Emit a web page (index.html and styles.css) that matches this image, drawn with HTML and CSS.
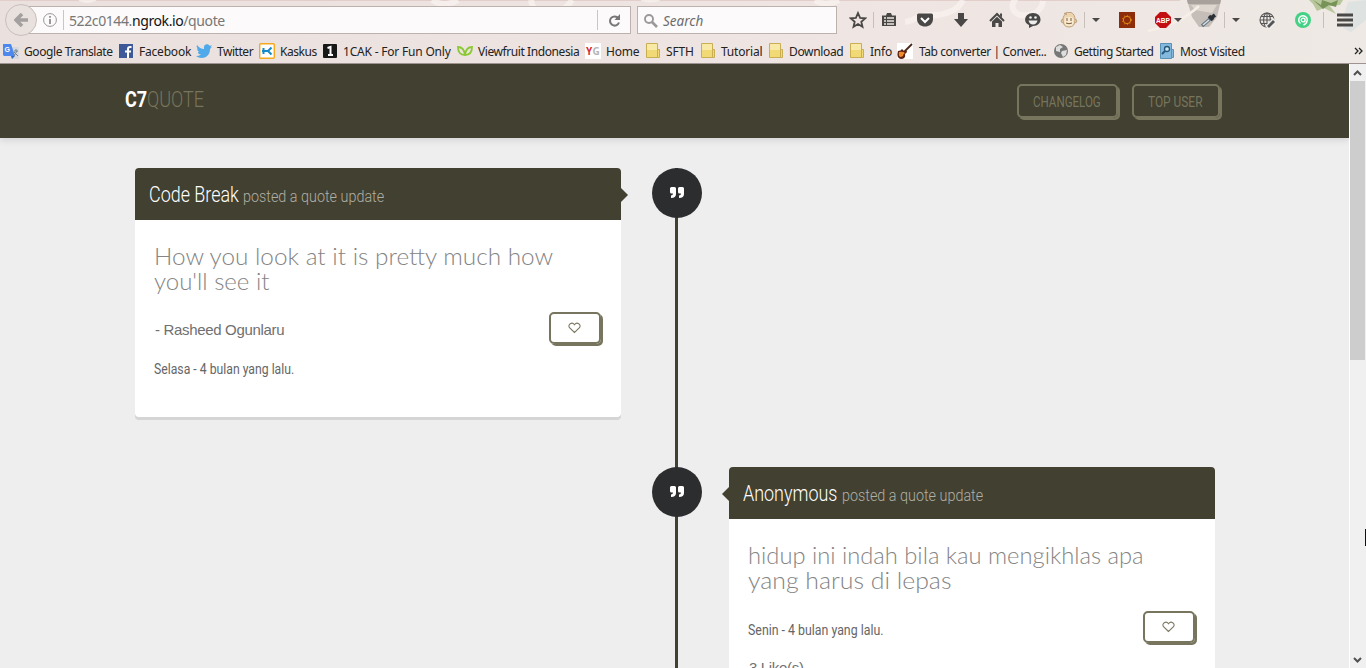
FILE: index.html
```html
<!DOCTYPE html>
<html lang="id">
<head>
<meta charset="utf-8">
<title>C7QUOTE</title>
<link rel="stylesheet" href="styles.css">
</head>
<body>
<div class="window">
<header class="chrome">
  <svg class="theme" width="1366" height="63" viewBox="0 0 1366 63">
    <defs><linearGradient id="th" x1="0" x2="1"><stop offset="0" stop-color="#eae0de"/><stop offset=".65" stop-color="#efe5e2"/><stop offset="1" stop-color="#eee9e4"/></linearGradient></defs>
    <path fill="url(#th)" d="M0 0h1366v63H0z"/><path fill="#e2cfcc" d="M0 0h1180v1H0z"/>
    <g fill="none" stroke="#f8f1ef" stroke-width="6" opacity=".8"><path d="M80-2q8 4 15 0M432 0q12 8 26 0M531 0c3 20 30 18 41 0M642-2q8 3 17 0M815 0q10 7 24 0M905 22c10-1 12-7 24-7 18 1 30-6 34-15M1018-4c-12 12-2 21 10 19 8-1 14-6 15-14"/></g>
    <path fill="#c5beb8" d="M1187 0h34l-4 17-8 10h-10l-7-10z"/><path fill="#a7a09b" d="M1187 0h34l-1 4h-32z"/><path fill="#ddd6cf" d="M1191 5h26l-5 8-17-3z"/><path d="M1148 31q32-7 51-25" fill="none" stroke="#f6efe8" stroke-width="2.500"/>
    <path fill="#b9c79c" d="M1309 0h34l-3 5-10 1 6 8-12-6-7 3-4-7z"/>
    <path fill="#789358" d="m1313 0 8 5 1-5 9 3 7-3-2 7-7-2-6 4z"/><path fill="#d9e1e0" d="m1348 2 18-2v20l-15 12-8-4 11-8-11-2z" opacity=".8"/>
  </svg>
  <div class="nav">
    <div class="address">
      <div class="back"><svg width="14" height="14" viewBox="0 0 14 14"><path d="M8 1 2 7l6 6M2 7h12" fill="none" stroke="#a3a09f" stroke-width="3.6"/></svg></div>
      <svg class="info" width="14" height="14" viewBox="0 0 14 14"><circle cx="7" cy="7" r="6.4" fill="none" stroke="#999"/><path d="M7 3v1.7M7 6v5" stroke="#888" stroke-width="1.7"/></svg>
      <div class="url"><span class="muted">522c0144.</span><span class="host">ngrok.io</span><span class="muted">/quote</span></div>
      <div class="reload"><svg width="13" height="13" viewBox="0 0 13 13"><path d="M10.3 4.2A4.6 4.6 0 1 0 11 8.5" fill="none" stroke="#777" stroke-width="2"/><path fill="#777" d="M12 0v6H6.5z"/></svg></div>
    </div>
    <div class="search"><svg width="14" height="14" viewBox="0 0 14 14"><circle cx="5" cy="5" r="4" fill="none" stroke="#999" stroke-width="1.9"/><path d="m8 8 5 5" stroke="#999" stroke-width="2.6"/></svg><span>Search</span></div>
    <div class="tools">
      <div class="tool star"><svg width="18" height="18" viewBox="0 0 18 18"><path d="m9 2 2.1 4.8 5.1.5-3.9 3.4 1.2 5.1L9 13.1l-4.5 2.7 1.2-5.1-3.9-3.4 5.1-.5z" fill="none" stroke="#4a4847" stroke-width="1.8"/></svg></div>
      <div class="tool ruled"><svg width="16" height="16" viewBox="0 0 16 16"><path fill="#4a4847" d="M1 3.500h4L6 1h4l1 2.500h4V14H1z"/><path d="M3 6h2M6 6h7M3 9h2M6 9h7M3 12h2M6 12h7" stroke="#eee6e3" stroke-width="1.500"/></svg></div>
      <div class="tool"><svg width="16" height="16" viewBox="0 0 16 16"><path fill="#4a4847" d="M1.500 1.500h13Q16 1.500 16 3v4c0 10-16 10-16 0V3q0-1.500 1.500-1.500z"/><path d="m4 6 4 4 4-4" fill="none" stroke="#fff" stroke-width="2"/></svg></div>
      <div class="tool"><svg width="16" height="16" viewBox="0 0 16 16"><path fill="#4a4847" d="M5 1h6v6h4l-7 8-7-8h4z"/></svg></div>
      <div class="tool"><svg width="16" height="16" viewBox="0 0 16 16"><path d="m1 9 7-7 7 7" fill="none" stroke="#4a4847" stroke-width="2"/><path fill="#4a4847" d="M3 9.500 8 4.700l5 4.800V15H9.500v-4h-3v4H3zM11 1.500h2v4l-2-2z"/></svg></div>
      <div class="tool smile"><svg width="16" height="16" viewBox="0 0 16 16"><path fill="#4a4847" d="M8 1c10 0 10 13 0 13l-4 2v-3C-3 10 0 1 8 1z"/><circle cx="5.500" cy="5.500" r="1.300" fill="#eee"/><circle cx="10.500" cy="5.500" r="1.300" fill="#eee"/><path fill="#eee" d="M3.500 8.500h9q-1 4-4.500 4t-4.500-4z"/></svg></div>
      <div class="tool smile"><svg width="18" height="18" viewBox="0 0 18 18"><g fill="#ecd5ae" stroke="#c0a27c"><circle cx="3" cy="10" r="1.800"/><circle cx="15" cy="10" r="1.800"/><path d="M3 9Q3 3 7 3l-3-.5Q7 1 11 1.500 15 3 15 9q0 7-6 7t-6-7z"/></g><path fill="#f7ead0" d="M4.500 8Q5 6 9 6t4.500 2v3q0 4-4.500 4t-4.500-4z"/><path d="M7 7v3m4-3v3M6 12q3 1.500 6 0" fill="none" stroke="#7a583b"/></svg></div>
      <div class="tool drop ruled"><i class="caret"></i></div>
      <div class="tool"><svg width="16" height="16" viewBox="0 0 16 16"><path fill="#8d2d0c" d="M0 0h16v16H0z"/><circle cx="8" cy="8" r="3.700" fill="none" stroke="#e58a16"/><circle cx="8" cy="8" r="4.600" fill="none" stroke="#e58a16" stroke-dasharray="1 2"/></svg></div>
      <div class="tool abp"><svg width="16" height="16" viewBox="0 0 16 16"><path fill="#c40f12" d="M5 0h6l5 5v6l-5 5H5l-5-5V5z"/><text x="8" y="11" text-anchor="middle" textLength="14" lengthAdjust="spacingAndGlyphs">ABP</text></svg><i class="caret"></i></div>
      <div class="tool dropper"><svg width="16" height="16" viewBox="0 0 16 16"><path d="m1 14 8-7" stroke="#697781" stroke-width="3.500"/><path d="m2 13 6-5" stroke="#d7e3e8" stroke-width="1.500"/><path d="m8 4 4 4M10 6l4-3" stroke="#2b3036" stroke-width="3.500"/></svg></div>
      <div class="tool drop ruled"><i class="caret"></i></div>
      <div class="tool"><svg width="17" height="17" viewBox="0 0 17 17"><g fill="none" stroke="#555" stroke-width="1.100"><circle cx="8" cy="8" r="7"/><ellipse cx="8" cy="8" rx="3.400" ry="7"/><path d="M1 8h14M2 4.500h12M2 11.500h12M8 1v14"/></g><path d="m8 16 8-8" stroke="#eee" stroke-width="5.500"/><path d="m9 15 6-6" stroke="#555" stroke-width="2.800"/></svg></div>
      <div class="tool"><svg width="16" height="16" viewBox="0 0 16 16"><circle cx="8" cy="8" r="8" fill="#43d185"/><path d="M5.500 11.500A4.300 4.300 0 1 1 12.300 8Q12 11.500 8.500 13" fill="none" stroke="#fff" stroke-width="1.500"/><circle cx="8.200" cy="8" r="1.900" fill="none" stroke="#fff" stroke-width="1.400"/></svg></div>
      <div class="tool menu ruled"><svg width="16" height="14" viewBox="0 0 16 14"><path d="M0 2h16M0 7h16M0 12h16" stroke="#4a4847" stroke-width="3"/></svg></div>
    </div>
  </div>
  <nav class="bookmarks">
    <a><svg width="16" height="16" viewBox="0 0 16 16"><path fill="#d5d8dc" d="M6 4h10v12H8z"/><path fill="#4d88ee" d="M0 1h8l4 12H1L0 12z"/><path fill="#3569c3" d="m8 13h4l-3 3z"/><path d="M11 8h4m-2-2v2m-2 5 3-5m-3 1 4 4" stroke="#728391"/><text class="g" x="1.500" y="9">G</text></svg><span>Google Translate</span></a>
    <a><svg width="16" height="16" viewBox="0 0 16 16"><path fill="#3d5998" d="M1 1h14v14H1z"/><path d="M13.500 4H12q-2 0-2 2v9M7 8.500h6" fill="none" stroke="#fff" stroke-width="2"/></svg><span>Facebook</span></a>
    <a><svg width="16" height="16" viewBox="0 0 16 16"><path fill="#50a9e8" d="M1 2q3 4 7 4c-1-5 4-6 6-3l2-1-1.500 2.500L16 4l-2 2c0 9-9 11-14 7q3 0 5-1.500-3 0-3-2.500h1.500Q1 8 1 5l1 .5Q0 4 1 2z"/></svg><span>Twitter</span></a>
    <a><svg width="16" height="16" viewBox="0 0 16 16"><rect x=".7" y=".7" width="14.600" height="14.600" rx="1" fill="#fff" stroke="#f5a91f" stroke-width="1.400"/><path d="M3 8h6M4.500 5v6M12.500 4.500 9 8l3.500 3.500" fill="none" stroke="#168acb" stroke-width="2"/></svg><span>Kaskus</span></a>
    <a><svg width="16" height="16" viewBox="0 0 16 16"><rect x="1" y="1" width="14" height="14" rx="1" fill="#181818"/><path d="m5.500 5 3-1v8M6 12h5" fill="none" stroke="#fff" stroke-width="2"/></svg><span>1CAK - For Fun Only</span></a>
    <a><svg width="16" height="16" viewBox="0 0 16 16"><path d="M1 4q6 0 7 8-7 0-7-8zm14 0q-6 0-7 8 7 0 7-8z" fill="none" stroke="#8bc934" stroke-width="1.800"/></svg><span>Viewfruit Indonesia</span></a>
    <a><svg width="16" height="16" viewBox="0 0 16 16"><path fill="#fff" d="M0 0h16v16H0z"/><text class="yg" x="1" y="12" fill="#d62b36">Y</text><text class="yg" x="7.500" y="12" fill="#b5b5b5">G</text></svg><span>Home</span></a>
    <a><svg width="16" height="16" viewBox="0 0 16 16"><g fill="#f1da75" stroke="#c9ae52"><path d="M11.500 6.500h3v8h-3z"/><path d="M1.500.5h11v14h-11z"/></g><path fill="#f8eaa6" d="M2 1h10v6H2z"/></svg><span>SFTH</span></a>
    <a><svg width="16" height="16" viewBox="0 0 16 16"><g fill="#f1da75" stroke="#c9ae52"><path d="M11.500 6.500h3v8h-3z"/><path d="M1.500.5h11v14h-11z"/></g><path fill="#f8eaa6" d="M2 1h10v6H2z"/></svg><span>Tutorial</span></a>
    <a><svg width="16" height="16" viewBox="0 0 16 16"><g fill="#f1da75" stroke="#c9ae52"><path d="M11.500 6.500h3v8h-3z"/><path d="M1.500.5h11v14h-11z"/></g><path fill="#f8eaa6" d="M2 1h10v6H2z"/></svg><span>Download</span></a>
    <a><svg width="16" height="16" viewBox="0 0 16 16"><g fill="#f1da75" stroke="#c9ae52"><path d="M11.500 6.500h3v8h-3z"/><path d="M1.500.5h11v14h-11z"/></g><path fill="#f8eaa6" d="M2 1h10v6H2z"/></svg><span>Info</span></a>
    <a><svg width="16" height="16" viewBox="0 0 16 16"><path fill="#fff" d="M0 0h16v16H0z"/><path d="m7 9 8-8" stroke="#4a2416" stroke-width="1.800"/><path fill="#5a2313" d="M1 8q3 0 4-2l2 2h3q0 2-2 3 1 5-4 5-5-1-3-8z"/><path fill="#f08c2c" d="M2 9q4-1 6 1-2 1-2 3-5 3-4-4z"/></svg><span>Tab converter | Conver...</span></a>
    <a><svg width="16" height="16" viewBox="0 0 16 16"><circle cx="8" cy="8" r="7" fill="#777"/><path fill="#ddd" d="M3 4l4-2 3 2-3 2v3L3 8zm6 4 5-1-1 5-3 2-2-4z"/></svg><span>Getting Started</span></a>
    <a><svg width="16" height="16" viewBox="0 0 16 16"><path fill="#83b9dc" stroke="#5c91b6" d="M1.500.5h11v15h-11zm11 6h2v8h-2"/><circle cx="8" cy="6" r="2.500" fill="#c9e5f3" stroke="#26557a" stroke-width="1.300"/><path d="m6 8-3 3" stroke="#26557a" stroke-width="1.800"/></svg><span>Most Visited</span></a>
    <svg class="more" width="9" height="8" viewBox="0 0 9 8"><path d="m1 1 3 3-3 3M5 1l3 3-3 3" fill="none" stroke="#222" stroke-width="1.300"/></svg>
  </nav>
</header>
<div class="viewport">
  <div class="page">
    <header class="site-head">
      <h1 class="logo"><b class="logo-c7">C7</b><span class="logo-quote">QUOTE</span></h1>
      <div class="menu-buttons"><a class="btn changelog"><span>CHANGELOG</span></a><a class="btn topuser"><span>TOP USER</span></a></div>
    </header>
    <main class="timeline">
      <section class="entry">
        <article class="card">
          <header class="card-head left"><b class="name code">Code Break</b><span class="posted">posted a quote update</span></header>
          <div class="card-body">
            <h2><span class="q q1">How you look at it is pretty much how</span><span class="q q2">you'll see it</span></h2>
            <div class="details"><div><p class="author">- Rasheed Ogunlaru</p><p class="when w1"><span>Selasa - 4 bulan yang lalu.</span></p></div>
            <a class="like"><svg width="13" height="12" viewBox="0 0 13 12"><path d="M6.500 10.500 1.500 5.700C-.7 2.500 4-.8 6.500 2.700 9-.8 13.700 2.500 11.500 5.700z" fill="none" stroke="#7b7960" stroke-width="1.100"/></svg></a></div>
          </div>
        </article>
        <div class="axis"><div class="dot"><svg width="14" height="12" viewBox="0 0 14 12"><path d="M0 1.500Q0 0 1.500 0h3Q6 0 6 1.500V7q0 4-5 4V8.500q2 0 2-2H1.500Q0 6.500 0 5zM8 1.500Q8 0 9.500 0h3Q14 0 14 1.500V7q0 4-5 4V8.500q2 0 2-2H9.500Q8 6.500 8 5z" fill="#fff"/></svg></div></div>
      </section>
      <section class="entry second">
        <div class="axis"><div class="dot"><svg width="14" height="12" viewBox="0 0 14 12"><path d="M0 1.500Q0 0 1.500 0h3Q6 0 6 1.500V7q0 4-5 4V8.500q2 0 2-2H1.500Q0 6.500 0 5zM8 1.500Q8 0 9.500 0h3Q14 0 14 1.500V7q0 4-5 4V8.500q2 0 2-2H9.500Q8 6.500 8 5z" fill="#fff"/></svg></div></div>
        <article class="card">
          <header class="card-head right"><b class="name anon">Anonymous</b><span class="posted">posted a quote update</span></header>
          <div class="card-body">
            <h2><span class="q q3">hidup ini indah bila kau mengikhlas apa</span><span class="q q4">yang harus di lepas</span></h2>
            <div class="details"><div><p class="when w2"><span>Senin - 4 bulan yang lalu.</span></p><p class="author likes">3 Like(s)</p></div>
            <a class="like"><svg width="13" height="12" viewBox="0 0 13 12"><path d="M6.500 10.500 1.500 5.700C-.7 2.500 4-.8 6.500 2.700 9-.8 13.700 2.500 11.500 5.700z" fill="none" stroke="#7b7960" stroke-width="1.100"/></svg></a></div>
          </div>
        </article>
      </section>
    </main>
  </div>
  <aside class="scrollbar"><svg width="9" height="6" viewBox="0 0 9 6"><path d="m1 5 3.500-3.500L8 5" fill="none" stroke="#505050" stroke-width="2"/></svg><div class="thumb"></div><svg width="9" height="6" viewBox="0 0 9 6"><path d="m1 1 3.500 3.500L8 1" fill="none" stroke="#505050" stroke-width="2"/></svg><i class="cursor"></i></aside>
</div>
</div>
</body>
</html>
```
FILE: styles.css
```css
* { box-sizing: border-box; }
body { margin: 0; overflow: hidden; font-family: "Liberation Sans", sans-serif; }
h1, h2, p { margin: 0; font-weight: 400; }
svg { display: block; flex: none; }
.window { width: 1366px; height: 668px; overflow: hidden; display: flex; flex-direction: column; }

.chrome { position: relative; height: 64px; flex: none; border-bottom: 1px solid #9d9490; font-family: "Noto Sans", sans-serif; }
.theme { position: absolute; inset: 0; }
.nav { position: relative; height: 39px; display: flex; padding: 6px 0 0 20px; }
.address { width: 611px; height: 28px; display: flex; align-items: center; background: #fcfafa; border: 1px solid #bbb1ad; }
.back { width: 32px; height: 32px; flex: none; margin-left: -16px; border-radius: 50%; border: 1px solid #c9bfbb; background: #e9e1de; display: flex; align-items: center; justify-content: center; }
.info { margin-left: 6px; }
.url { flex: 1; height: 20px; margin-left: 6px; padding-left: 5px; border-left: 1px solid #ccc6c3; display: flex; font-size: 14px; line-height: 21px; letter-spacing: -.4px; white-space: nowrap; }
.muted { color: #777; }
.host { color: #111; }
.reload { width: 33px; height: 20px; border-left: 1px solid #ccc6c3; display: flex; align-items: center; justify-content: center; }
.search { width: 200px; height: 28px; margin-left: 6px; padding: 1px 6px 0; display: flex; align-items: center; gap: 5px; background: #fcfafa; border: 1px solid #bbb1ad; font-size: 13.5px; font-style: italic; color: #6c6c6c; }
.tools { display: flex; height: 28px; margin-left: 8px; }
.tool { width: 36px; flex: none; display: flex; align-items: center; justify-content: center; position: relative; }
.star { width: 26px; }
.smile { padding-right: 1px; }
.drop { width: 22px; padding-right: 5px; }
.dropper { margin-left: 10px; }
.menu { width: 45px; padding-left: 3px; }
.ruled::before { content: ""; position: absolute; left: 2px; top: 6px; height: 16px; border-left: 1px solid #c8bfbb; }
.drop.ruled::before { left: -3px; }
.caret { border: 4px solid transparent; border-top-color: #4a4847; border-bottom: 0; }
.abp .caret { position: absolute; left: 29px; top: 12px; }
.abp text { font: 700 7.5px "Liberation Sans", sans-serif; fill: #fff; }
.bookmarks { position: relative; height: 24px; display: flex; align-items: center; padding-left: 3px; }
.bookmarks a { flex: none; display: flex; align-items: center; gap: 5px; height: 20px; font-size: 12px; letter-spacing: -.2px; line-height: 20px; color: #222; white-space: nowrap; }
.bookmarks a span { padding-top: 2px; }
.bookmarks a:nth-child(1) { width: 115px; letter-spacing: -.42px; }
.bookmarks a:nth-child(2) { width: 78px; }
.bookmarks a:nth-child(3), .bookmarks a:nth-child(4) { width: 63px; letter-spacing: -.45px; }
.bookmarks a:nth-child(5) { width: 135px; }
.bookmarks a:nth-child(6) { width: 128px; letter-spacing: -.42px; }
.bookmarks a:nth-child(7) { width: 60px; }
.bookmarks a:nth-child(8) { width: 55px; }
.bookmarks a:nth-child(9) { width: 68px; }
.bookmarks a:nth-child(10) { width: 81px; letter-spacing: -.35px; }
.bookmarks a:nth-child(11) { width: 48px; }
.bookmarks a:nth-child(12) { width: 156px; gap: 6px; letter-spacing: -.42px; }
.bookmarks a:nth-child(13) { width: 106px; letter-spacing: -.45px; }
.bookmarks a:nth-child(14) { width: 95px; letter-spacing: -.35px; }
.more { margin-left: 100px; }
.g { font: 700 7px "Liberation Sans", sans-serif; fill: #fff; }
.yg { font: 700 10px "Open Sans", sans-serif; }

.viewport { flex: 1; display: flex; min-height: 0; }
.page { width: 1349px; flex: none; overflow: hidden; background: #eee; }
.site-head { height: 74px; padding: 20px 129px 0 125px; display: flex; justify-content: space-between; background: #424030; box-shadow: 0 2px 7px rgba(0,0,0,.12); font-family: Roboto, sans-serif; }
.logo { display: flex; font-size: 22px; line-height: 31px; }
.logo b, .logo span, .name, .posted, .btn span, .q, .when span { display: block; flex: none; white-space: nowrap; transform-origin: 0 50%; }
.logo-c7 { width: 22px; color: #fff; transform: scaleX(.82); font-weight: 700; }
.logo-quote { color: #77755d; font-weight: 300; transform: scaleX(.82); width: 60px; }
.menu-buttons { display: flex; gap: 14px; }
.btn { height: 34px; border: 2px solid #77755d; border-radius: 5px; box-shadow: 2px 2px 0 #77755d; padding-left: 14px; color: #77755d; font-size: 14px; line-height: 32px; }
.changelog { width: 101px; }
.topuser { width: 88px; }
.changelog span { width: 67px; transform: scaleX(.825); }
.topuser span { width: 54px; transform: scaleX(.85); }

.timeline { padding: 30px 134px 0 135px; }
.entry { display: flex; height: 299px; }
.second { padding-left: 517px; height: 400px; }
.axis { width: 50px; margin-left: 31px; flex: none; background: linear-gradient(90deg, transparent 23px, #424030 23px, #424030 26px, transparent 26px); }
.second .axis { margin: 0 27px 0 0; }
.dot { width: 50px; height: 50px; padding-right: 1px; border-radius: 50%; background: #2c2d2f; display: flex; align-items: center; justify-content: center; }
.card { width: 486px; height: 249px; flex: none; border-radius: 4px; background: #fff; box-shadow: 0 3px 0 #d5d5d5; }
.second .card { height: 400px; }
.card-head { position: relative; height: 52px; border-radius: 4px 4px 0 0; background: #424030; display: flex; align-items: baseline; gap: 5px; padding: 13px 14px 0; font-family: Roboto, sans-serif; }
.card-head::after { content: ""; position: absolute; top: 20px; border: 7px solid transparent; }
.left::after { left: 486px; border-left-color: #424030; border-right: 0; }
.right::after { right: 486px; border-right-color: #424030; border-left: 0; }
.name { font-size: 22px; line-height: 28px; font-weight: 300; color: #fff; }
.code { width: 89px; transform: scaleX(.815); }
.anon { width: 94px; transform: scaleX(.815); }
.posted { width: 141px; font-size: 17px; font-weight: 300; color: #b0afa5; transform: scaleX(.845); }
.card-body { padding: 24px 20px 0 19px; }
.q { height: 25px; line-height: 23px; font-family: Lato, sans-serif; font-size: 24px; font-weight: 300; color: #848484; }
.q1 { transform: scaleX(1.014); }
.q3 { transform: scaleX(.988); }
.q4 { transform: scaleX(1.035); }
.details { display: flex; justify-content: space-between; margin-top: 18px; color: #707070; }
.author { font-size: 15px; line-height: 20px; margin: 8px 0 0 1px; letter-spacing: -.33px; }
.when { margin-top: 19px; height: 20px; font: 14px/20px Roboto, sans-serif; color: #666; }
.w1 span { width: 140px; transform: scaleX(.873); }
.w2 { margin-top: 9px; }
.w2 span { width: 136px; transform: scaleX(.882); }
.likes { margin-top: 18px; }
.like { width: 52px; height: 32px; padding-right: 1px; border: 2px solid #77755d; border-radius: 5px; box-shadow: 2px 2px 0 #77755d; display: flex; align-items: center; justify-content: center; }

.scrollbar { position: relative; width: 17px; flex: none; background: #f0f0f0; border-left: 1px solid #fff; padding: 6px 1px 5px 0; display: flex; flex-direction: column; align-items: center; }
.thumb { width: 15px; height: 279px; background: #cdcdcd; margin: 5px 0 auto; }
.cursor { position: absolute; right: 0; top: 465px; width: 1px; height: 17px; background: #111; }
```
